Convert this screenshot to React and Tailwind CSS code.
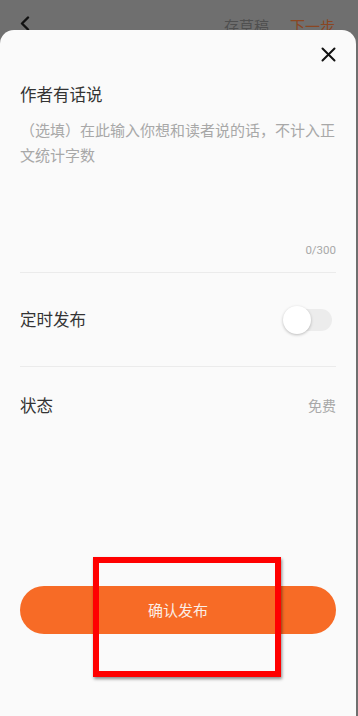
import React from "react";

export default function App() {
  return (
    <div
      className="relative w-[358px] h-[716px] overflow-hidden bg-[#6f6f6f]"
      style={{ fontFamily: '"Noto Sans CJK SC", "Noto Sans", sans-serif' }}
    >
      <header className="h-[50px] flex items-start pl-5 pr-[23px] pt-[15px]">
        <svg width="10" height="15" viewBox="0 0 10 15" className="mt-px">
          <path d="M8 1.5 L2 7.5 L8 13.5" fill="none" stroke="#111" strokeWidth="2.4" strokeLinecap="round" strokeLinejoin="round" />
        </svg>
        <div className="ml-auto flex items-center gap-[21px] text-[15px] leading-[20px] pt-[1px]">
          <span className="text-[#4f4f4f]">存草稿</span>
          <span className="text-[#8a4622]">下一步</span>
        </div>
      </header>

      <div className="absolute left-0 top-[30px] bottom-0 w-[356px] bg-[#fafafa] rounded-t-[14px] px-5 flex flex-col">
        <div className="flex justify-end pt-[17px] h-[32px]">
          <svg width="15" height="15" viewBox="0 0 15 15">
            <path d="M1.5 1.5 L13.5 13.5 M13.5 1.5 L1.5 13.5" stroke="#111" strokeWidth="2" strokeLinecap="round" />
          </svg>
        </div>
        <div className="mt-[20px] text-[16.5px] leading-[24px] text-[#333]">作者有话说</div>
        <p className="mt-[11px] text-[15px] leading-[25px] text-[#a8a8a8]">
          （选填）在此输入你想和读者说的话，不计入正文统计字数
        </p>
        <div
          className="mt-[75px] text-right text-[11.5px] leading-[16px] text-[#a8a8a8]"
          style={{ fontFamily: 'Roboto, "Noto Sans", sans-serif' }}
        >
          0/300
        </div>
        <div className="mt-[14px] h-px bg-[#ebebeb]" />
        <div className="h-[93px] flex items-center justify-between">
          <span className="text-[16.5px] text-[#333]">定时发布</span>
          <div className="relative w-[49px] h-[28px] mr-[4px]">
            <div className="absolute left-[2px] right-0 top-[3px] bottom-[3px] rounded-full bg-[#ececec]" />
            <div className="absolute left-0 top-0 w-[28px] h-[28px] rounded-full bg-white shadow-[0_1px_3px_rgba(0,0,0,0.25)]" />
          </div>
        </div>
        <div className="h-px bg-[#ebebeb]" />
        <div className="h-[77px] flex items-center justify-between">
          <span className="text-[16.5px] text-[#333]">状态</span>
          <span className="text-[14px] text-[#a8a8a8]">免费</span>
        </div>
        <button className="mt-[142px] w-full h-[48px] rounded-full bg-[#f76b26] text-[#fbeee6] text-[15px] leading-[48px]">
          确认发布
        </button>
      </div>

      <div className="absolute left-[93px] top-[557px] w-[188px] h-[120px] border-[6px] border-[#ff0000] shadow-[1px_2px_3px_rgba(0,0,0,0.45)]" />
    </div>
  );
}
